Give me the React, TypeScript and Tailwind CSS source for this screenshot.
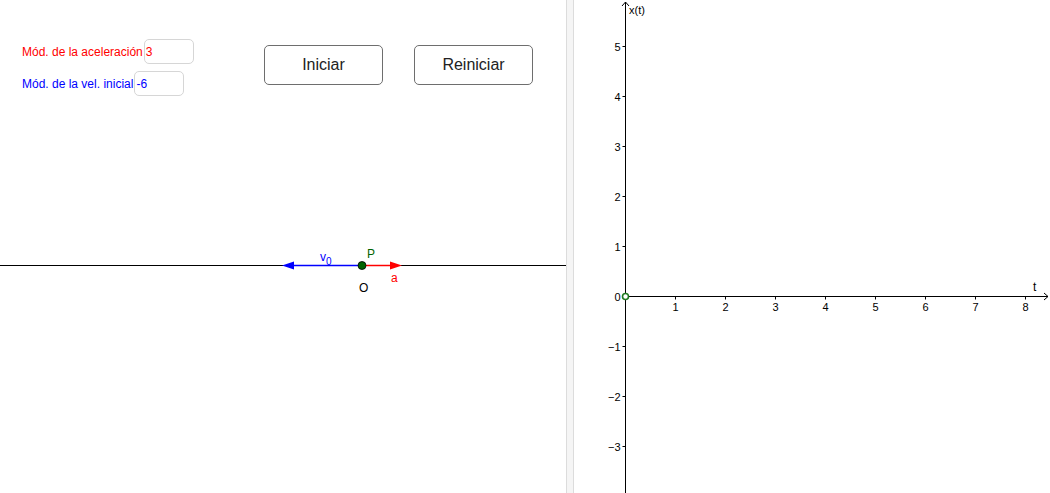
const font = { fontFamily: '"Liberation Sans", Arial, sans-serif' }

const yTicks = [5, 4, 3, 2, 1, -1, -2, -3]
const xTicks = [1, 2, 3, 4, 5, 6, 7, 8]

function NumberLine() {
  return (
    <svg className="absolute inset-0" width={566} height={493} style={font}>
      <line x1={0} y1={265.5} x2={566} y2={265.5} stroke="#000" strokeWidth={1} />
      <line x1={362} y1={265.5} x2={292} y2={265.5} stroke="#0000ff" strokeWidth={1.5} />
      <polygon points="282,265.5 294,261.5 294,269.5" fill="#0000ff" />
      <line x1={362} y1={265.5} x2={391} y2={265.5} stroke="#ff0000" strokeWidth={1.5} />
      <polygon points="402,265.5 390,261.5 390,269.5" fill="#ff0000" />
      <circle cx={362} cy={265.5} r={4} fill="#006400" stroke="#000" strokeWidth={0.8} />
      <text x={320} y={261} fontSize={12} fill="#0000ff">v</text>
      <text x={326} y={265} fontSize={10} fill="#0000ff">0</text>
      <text x={367} y={258} fontSize={12} fill="#006400">P</text>
      <text x={391} y={282} fontSize={12} fill="#ff0000">a</text>
      <text x={359} y={292} fontSize={12} fill="#000">O</text>
    </svg>
  )
}

function Graph() {
  const ox = 51.5
  const oy = 296.5
  return (
    <svg width={476} height={493} style={font}>
      <line x1={ox} y1={2} x2={ox} y2={493} stroke="#000" strokeWidth={1} />
      <polyline points={`${ox - 3.5},6 ${ox},2 ${ox + 3.5},6`} fill="none" stroke="#000" strokeWidth={1} />
      <line x1={ox} y1={oy} x2={474} y2={oy} stroke="#000" strokeWidth={1} />
      <polyline points={`470,${oy - 3.5} 474,${oy} 470,${oy + 3.5}`} fill="none" stroke="#000" strokeWidth={1} />
      <text x={55} y={14} fontSize={11} fill="#000">x(t)</text>
      <text x={459} y={291} fontSize={12} fill="#000">t</text>
      {yTicks.map((v) => {
        const y = oy - v * 50
        return (
          <g key={v}>
            <line x1={ox - 3} y1={y} x2={ox} y2={y} stroke="#000" strokeWidth={1} />
            <text x={ox - 5} y={y + 4} fontSize={11} fill="#000" textAnchor="end">
              {v < 0 ? `\u2212${-v}` : v}
            </text>
          </g>
        )
      })}
      <text x={ox - 5} y={oy + 4} fontSize={11} fill="#000" textAnchor="end">0</text>
      {xTicks.map((v) => {
        const x = ox + v * 50
        return (
          <g key={v}>
            <line x1={x} y1={oy} x2={x} y2={oy + 3} stroke="#000" strokeWidth={1} />
            <text x={x} y={oy + 14} fontSize={11} fill="#000" textAnchor="middle">{v}</text>
          </g>
        )
      })}
      <circle cx={ox} cy={oy} r={3} fill="#ffffff" stroke="#1f7a1f" strokeWidth={1.6} />
    </svg>
  )
}

function Field({ label, value, color }: { label: string; value: string; color: string }) {
  return (
    <div className="flex items-center h-[25px]">
      <span className={`text-[12px] ${color}`}>{label}</span>
      <div className={`ml-[1px] flex h-[25px] w-[50px] items-center rounded-[5px] border border-[#d6d6d6] bg-white px-[1px] text-[12px] ${color}`}>
        {value}
      </div>
    </div>
  )
}

export default function App() {
  return (
    <div className="flex h-[493px] w-[1050px] overflow-hidden bg-white text-black" style={font}>
      <div className="relative w-[566px] shrink-0">
        <NumberLine />
        <div className="relative flex pt-[39px]">
          <div className="flex w-[264px] flex-col gap-[7px] pl-[22px]">
            <Field label="Mód. de la aceleración" value="3" color="text-[#ff0000]" />
            <Field label="Mód. de la vel. inicial" value="-6" color="text-[#0000ff]" />
          </div>
          <div className="flex gap-[31px] pt-[6px]">
            <button className="h-[40px] w-[119px] rounded-[5px] border border-[#6e6e6e] bg-white text-[16px] text-[#222]">
              Iniciar
            </button>
            <button className="h-[40px] w-[119px] rounded-[5px] border border-[#6e6e6e] bg-white text-[16px] text-[#222]">
              Reiniciar
            </button>
          </div>
        </div>
      </div>
      <div className="h-full w-[8px] shrink-0 border-x border-[#dcdcdc] bg-[#f5f5f5]" />
      <div className="flex-1">
        <Graph />
      </div>
    </div>
  )
}
